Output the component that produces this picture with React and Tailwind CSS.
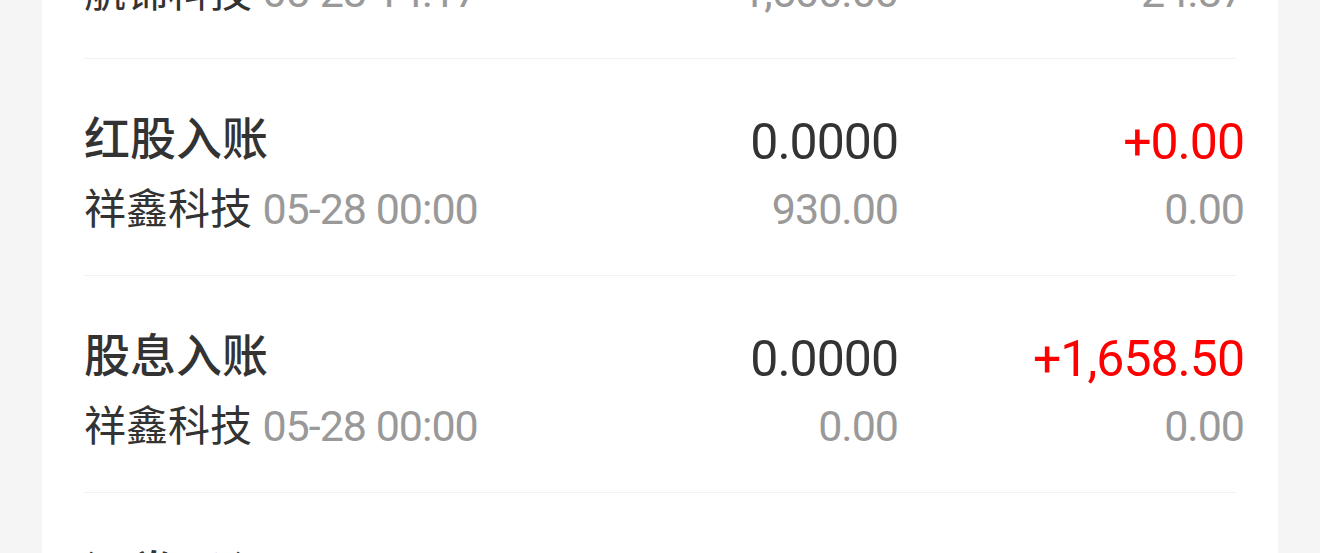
const rows = [
  { title: '现金分红', company: '航锦科技', time: '05-28 14:17', price: '0.0000', qty: '1,500.00', amount: '+24.87', fee: '24.87' },
  { title: '红股入账', company: '祥鑫科技', time: '05-28 00:00', price: '0.0000', qty: '930.00', amount: '+0.00', fee: '0.00' },
  { title: '股息入账', company: '祥鑫科技', time: '05-28 00:00', price: '0.0000', qty: '0.00', amount: '+1,658.50', fee: '0.00' },
  { title: '证券买入', company: '祥鑫科技', time: '05-27 09:30', price: '0.0000', qty: '0.00', amount: '+0.00', fee: '0.00' },
];

function Row({ r }) {
  return (
    <div>
      <div className="flex items-start pt-[50px] pb-[36px] pl-[42px] pr-[34px]">
        <div className="flex-1">
          <p className="h-[60px] text-[46px] leading-[60px] text-[#333333] font-medium">{r.title}</p>
          <p className="h-[60px] mt-[10px] text-[42px] leading-[60px] text-[#333333]">
            {r.company} <span className="text-[#999999] text-[43px] tracking-[-1px]">{r.time}</span>
          </p>
        </div>
        <div className="w-[200px] text-right">
          <p className="h-[63px] pt-[3px] text-[50px] leading-[60px] text-[#333333] tracking-[-1px]">{r.price}</p>
          <p className="h-[60px] mt-[7px] text-[43px] leading-[60px] text-[#999999] tracking-[-1px]">{r.qty}</p>
        </div>
        <div className="w-[346px] text-right">
          <p className="h-[63px] pt-[3px] text-[50px] leading-[60px] text-[#ff0000] tracking-[-1px]">{r.amount}</p>
          <p className="h-[60px] mt-[7px] text-[43px] leading-[60px] text-[#999999] tracking-[-1px]">{r.fee}</p>
        </div>
      </div>
      <div className="mx-[42px] h-px bg-[#f2f2f2]" />
    </div>
  );
}

export default function App() {
  return (
    <div className="h-[553px] overflow-hidden bg-[#f5f5f5] px-[42px]" style={{ fontFamily: 'Roboto, "Noto Sans CJK SC", sans-serif' }}>
      <div className="bg-white -mt-[158px]">
        {rows.map(r => <Row key={r.title + r.amount} r={r} />)}
      </div>
    </div>
  );
}
